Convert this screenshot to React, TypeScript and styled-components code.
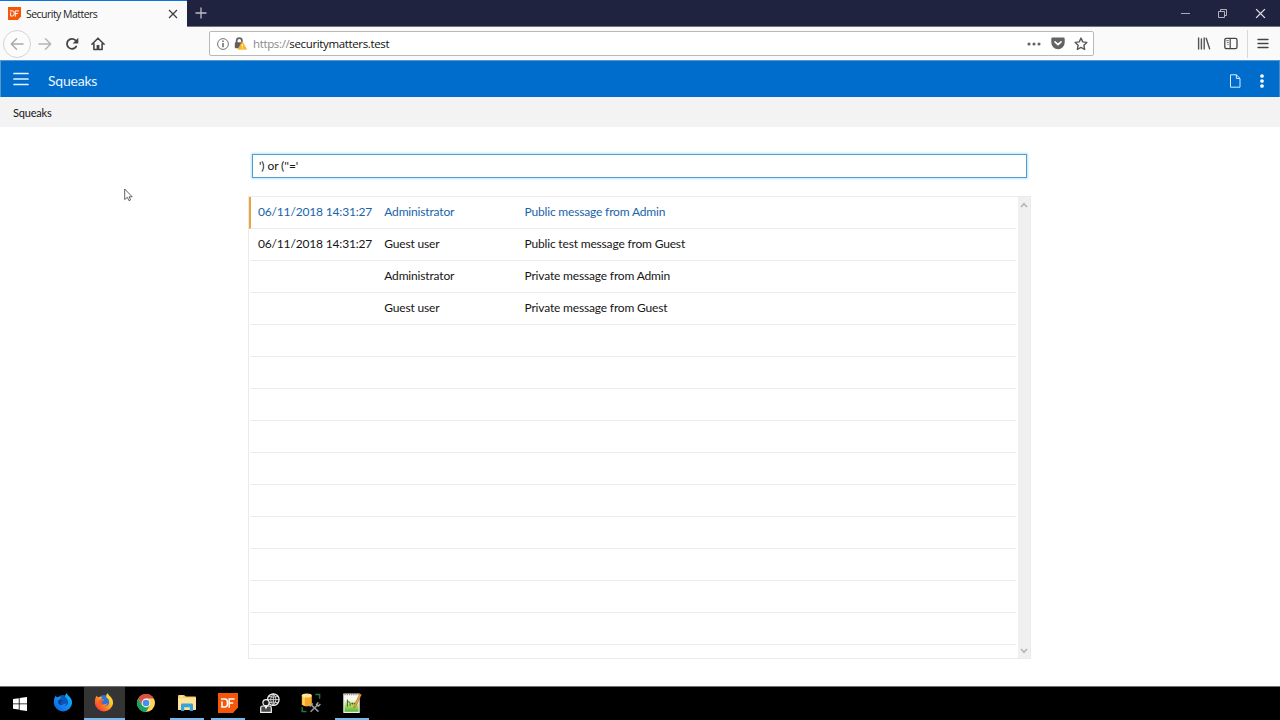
import React from 'react'
import styled, { createGlobalStyle, css } from 'styled-components'

type Message = {
    date: string
    author: string
    text: string
}

const messages: Message[] = [
    { date: '06/11/2018 14:31:27', author: 'Administrator', text: 'Public message from Admin' },
    { date: '06/11/2018 14:31:27', author: 'Guest user', text: 'Public test message from Guest' },
    { date: '', author: 'Administrator', text: 'Private message from Admin' },
    { date: '', author: 'Guest user', text: 'Private message from Guest' },
]

const ROW_COUNT = 14

const rows = Array.from({ length: ROW_COUNT }, (_, i) => messages[i])

const DataFlexIcon = ({ size }: { size: number }) => (
    <svg width={size} height={size} viewBox="0 0 20 20">
        <path d="M0 0h20v14.5L15 20H0z" fill="#f4570b" />
        <path
            d="M3 6h3.6q2.8 0 2.8 2.6v2.6q0 2.7-2.8 2.7H4V8.4M11.2 14.8V6h5.4M11.2 10.1h4"
            fill="none"
            stroke="#fff"
            strokeWidth="1.5"
        />
    </svg>
)

const CloseIcon = ({ size, color }: { size: number; color: string }) => (
    <svg width={size} height={size} viewBox="0 0 10 10">
        <path d="M1 1l8 8M9 1L1 9" stroke={color} strokeWidth="1.2" fill="none" />
    </svg>
)

const ArrowIcon = ({ flip, color }: { flip?: boolean; color: string }) => (
    <svg width="14" height="14" viewBox="0 0 14 14">
        <path
            d="M13 7H1.5M6.5 1.8L1.3 7l5.2 5.2"
            transform={flip ? 'matrix(-1 0 0 1 14 0)' : undefined}
            fill="none"
            stroke={color}
            strokeWidth="1.5"
            strokeLinecap="round"
            strokeLinejoin="round"
        />
    </svg>
)

const ReloadIcon = () => (
    <svg width="14" height="14" viewBox="0 0 14 14">
        <path d="M11.2 9.5A5 5 0 1 1 10.4 3.2" fill="none" stroke="#454548" strokeWidth="1.8" strokeLinecap="round" />
        <path d="M13.3 .8v5.7H7.6z" fill="#454548" />
    </svg>
)

const HomeIcon = () => (
    <svg width="14" height="14" viewBox="0 0 14 14">
        <path
            d="M.9 7.2L7 1.2l6.1 6M2.9 6.8v5.7h8.2V6.8"
            fill="none"
            stroke="#454548"
            strokeWidth="1.6"
            strokeLinecap="round"
            strokeLinejoin="round"
        />
        <path d="M5.6 12.5V8h2.8v4.5z" fill="#454548" />
    </svg>
)

const InfoIcon = () => (
    <svg width="12" height="12" viewBox="0 0 12 12">
        <circle cx="6" cy="6" r="5.4" fill="none" stroke="#737373" strokeWidth="1" />
        <path d="M6 2.6v1.5M6 5v4.3" stroke="#606060" strokeWidth="1.4" />
    </svg>
)

const LockIcon = () => (
    <svg width="13" height="13" viewBox="0 0 13 13">
        <path d="M2.7 6V3.8a2.6 2.6 0 0 1 5.2 0V6" fill="none" stroke="#666" strokeWidth="1.8" />
        <rect x=".8" y="5.2" width="8.4" height="6" rx=".8" fill="#606064" />
        <path d="M8.3 4.7l4.3 7.6H4z" fill="#ffb51c" stroke="#fcb427" strokeWidth=".7" strokeLinejoin="round" />
        <path d="M8.3 7v2.6M8.3 10.4v1.1" stroke="#fff" strokeWidth="1" />
    </svg>
)

const DotsIcon = () => (
    <svg width="14" height="4" viewBox="0 0 14 4">
        <circle cx="2" cy="2" r="1.55" fill="#636366" />
        <circle cx="7" cy="2" r="1.55" fill="#636366" />
        <circle cx="12" cy="2" r="1.55" fill="#636366" />
    </svg>
)

const PocketIcon = () => (
    <svg width="14" height="13" viewBox="0 0 14 13">
        <path d="M1.6.5h10.8q1.3 0 1.3 1.3v3.7a6.7 6.7 0 0 1-13.4 0V1.8Q.3.5 1.6.5z" fill="#636366" />
        <path
            d="M4 4.8l3 2.9 3-2.9"
            fill="none"
            stroke="#fff"
            strokeWidth="1.7"
            strokeLinecap="round"
            strokeLinejoin="round"
        />
    </svg>
)

const StarIcon = () => (
    <svg width="14" height="14" viewBox="0 0 14 14">
        <path
            d="M7 1.1l1.75 3.8 4.1.5-3 2.8.8 4.3L7 10.4l-3.65 2.1.8-4.3-3-2.8 4.1-.5z"
            fill="none"
            stroke="#58585b"
            strokeWidth="1.4"
            strokeLinejoin="round"
        />
    </svg>
)

const LibraryIcon = () => (
    <svg width="14" height="13" viewBox="0 0 14 13">
        <path d="M1.6 1v11M4.4 2v10M7.2 1v11M9.2 1.3l3.4 10.5" stroke="#555558" strokeWidth="1.4" strokeLinecap="round" />
    </svg>
)

const SidebarIcon = () => (
    <svg width="14" height="13" viewBox="0 0 14 13">
        <rect x=".8" y="1.3" width="12.2" height="10.4" rx="1.8" fill="none" stroke="#454548" strokeWidth="1.3" />
        <path d="M6.2 1.5v10" stroke="#454548" strokeWidth="1.2" />
        <path d="M2.3 3.6h2.4M2.8 5.5h1.9M3.4 7.4h1.2" stroke="#68686b" strokeWidth=".9" />
    </svg>
)

const BarsIcon = ({ color, width, gap, weight = 1.5 }: { color: string; width: number; gap: number; weight?: number }) => (
    <svg width={width} height={gap * 2 + 3} viewBox={`0 0 ${width} ${gap * 2 + 3}`}>
        {[0, 1, 2].map(i => (
            <path
                key={i}
                d={`M1 ${1.5 + i * gap}H${width - 1}`}
                stroke={color}
                strokeWidth={weight}
                strokeLinecap="round"
            />
        ))}
    </svg>
)

const PageIcon = () => (
    <svg width="12" height="14" viewBox="0 0 12 14">
        <path d="M1.5.8h5.9L11 4.4v8.8H1.5zM7.4.8v3.6H11" fill="none" stroke="#d6ecff" strokeWidth="1" />
    </svg>
)

const KebabIcon = () => (
    <svg width="4" height="14" viewBox="0 0 4 14">
        <circle cx="2" cy="2" r="1.85" fill="#fff" />
        <circle cx="2" cy="7" r="1.85" fill="#fff" />
        <circle cx="2" cy="12" r="1.85" fill="#fff" />
    </svg>
)

const ChevronIcon = ({ down }: { down?: boolean }) => (
    <svg width="8" height="6" viewBox="0 0 8 6">
        <path d={down ? 'M1 1l3 3.2L7 1' : 'M1 5l3-3.2L7 5'} fill="none" stroke="#b8b8b8" strokeWidth="1.8" />
    </svg>
)

const CursorIcon = () => (
    <svg width="9" height="14" viewBox="0 0 9 14">
        <path
            d="M.7 1v10.6l2.6-2.3 1.7 3.4 1.6-.8L5 8.8h3.2z"
            fill="#fff"
            stroke="#3a3a44"
            strokeWidth=".8"
        />
    </svg>
)

const WindowsIcon = () => (
    <svg width="14" height="14" viewBox="0 0 14 14">
        <path d="M0 2.1l5.8-.9v5.3H0zM6.6 1.1L14 0v6.5H6.6zM0 7.3h5.8v5.3L0 11.8zM6.6 7.3H14V14l-7.4-1.1z" fill="#fff" />
    </svg>
)

const FirefoxIcon = ({ blue }: { blue?: boolean }) => {
    const id = blue ? 'fxdev' : 'fx'
    return (
        <svg width="20" height="20" viewBox="0 0 20 20">
            <defs>
                <linearGradient id={id} x1="1" y1="0" x2=".1" y2=".9">
                    <stop offset="0" stopColor={blue ? '#12c4f5' : '#fff14a'} />
                    <stop offset=".4" stopColor={blue ? '#0a9cf8' : '#ffc02a'} />
                    <stop offset=".7" stopColor={blue ? '#1480f0' : '#ff7422'} />
                    <stop offset="1" stopColor={blue ? '#0a62dc' : '#f5304a'} />
                </linearGradient>
            </defs>
            <circle cx="10" cy="9" r="7" fill={blue ? '#0b56b8' : '#2a72dc'} />
            <path
                d="M2.6 2.4Q3.2 3.8 4.3 4.3 6 3.4 8.3 4.1 7 5 7.4 6.2l2.5.4Q9.2 7.8 7.6 8.6 7.3 11.4 10 11.6q2.2-.4 3.6-1.5-.6 3-3.4 3.5 5-.4 5-4.5Q15 5.8 12.4 4.4 11.6 1.7 13.9.3 14.2 2.6 17 4.2 19.2 6.6 19.1 10.2A9.2 9.2 0 0 1 .8 10.2Q.6 5 2.6 2.4z"
                fill={`url(#${id})`}
            />
            <path
                d="M5.5 7.3q2-1.7 4.4-.3-.5 1.7-2.3 1.9-.2 2.3 2.6 2.4Q7.5 13 5.6 11 4.6 9 5.5 7.3z"
                fill={blue ? '#083c8c' : '#f65c22'}
            />
        </svg>
    )
}

const ChromeIcon = () => (
    <svg width="18" height="18" viewBox="0 0 18 18">
        <circle cx="9" cy="9" r="9" fill="#ffd557" />
        <path d="M1.2 4.5A9 9 0 0 1 16.8 4.5H9L5.1 11.2z" fill="#dd5144" />
        <path d="M1.2 4.5L5.1 11.2 9 13.2 12.9 11.2 9 18A9 9 0 0 1 1.2 4.5z" fill="#1aa260" />
        <circle cx="9" cy="9" r="4.4" fill="#f4f4f4" />
        <circle cx="9" cy="9" r="3.3" fill="#4a8cf0" />
    </svg>
)

const FolderIcon = () => (
    <svg width="18" height="16" viewBox="0 0 18 16">
        <path d="M0 1q0-1 1-1h5l2 1.6h9q1 0 1 1V14q0 1-1 1H1q-1 0-1-1z" fill="#f4ca64" />
        <path d="M0 2.8h18V14q0 1-1 1H1q-1 0-1-1z" fill="#ffe39a" />
        <path d="M3 16V10q0-1.4 1.4-1.4h9.2Q15 8.6 15 10v6h-3.2v-3.8H6.2V16z" fill="#35a4dc" />
        <path d="M1.5 1.2h3.4" stroke="#fff2c8" />
    </svg>
)

const UserGlobeIcon = () => (
    <svg width="20" height="20" viewBox="0 0 20 20">
        <circle cx="13.3" cy="6.6" r="5.8" fill="#111" stroke="#eee" strokeWidth="1.3" />
        <path
            d="M7.5 6.6h11.6M8.5 3.4q4.8 1.6 9.6 0M8.5 9.8q4.8-1.6 9.6 0M13.3.8v11.6M13.3.8q-5.4 5.8 0 11.6M13.3.8q5.4 5.8 0 11.6"
            fill="none"
            stroke="#eee"
            strokeWidth=".8"
        />
        <circle cx="6" cy="9.7" r="3.1" fill="#1a1a1a" stroke="#f4f4f4" strokeWidth="1.2" />
        <path d="M.7 19.3v-4.5q0-1.8 1.9-1.8h6.8q1.9 0 1.9 1.8v4.5z" fill="#484848" stroke="#f4f4f4" strokeWidth="1.2" />
        <path d="M4.4 13h3.2L6 16.6z" fill="#fff" />
    </svg>
)

const DatabaseToolsIcon = () => (
    <svg width="20" height="20" viewBox="0 0 20 20">
        <path d="M.8 2.4v9.4q4.8 3.2 10 0V2.4z" fill="#f9a72b" />
        <path d="M1.3 3v8.5q1.2.8 2.6 1V3.6z" fill="#ffd057" />
        <ellipse cx="5.8" cy="2.5" rx="5" ry="2.1" fill="#ffe49a" />
        <path d="M14.4 1.6h4.2v4.2M5.4 18.6H1.2v-4.4" fill="none" stroke="#327047" strokeWidth="1.5" />
        <path d="M9.6 18.8l7.2-7M10.5 12.1l7 6.5" stroke="#9a9a9a" strokeWidth="1.5" />
        <path d="M19.4 11l-2.1 2-1.7-1.6 1.8-2M8.6 13.6l3.2-3" fill="none" stroke="#a8a8a8" strokeWidth="1.4" />
    </svg>
)

const NotepadIcon = () => (
    <svg width="19" height="20" viewBox="0 0 19 20">
        <defs>
            <linearGradient id="npp" x1="0" y1="0" x2="0" y2="1">
                <stop offset=".3" stopColor="#f8faf0" />
                <stop offset=".62" stopColor="#b4de62" />
                <stop offset="1" stopColor="#4fb13d" />
            </linearGradient>
        </defs>
        <path d="M.9 1h15.2v18.3H.9z" fill="url(#npp)" stroke="#f0f0ec" strokeWidth="1.2" />
        <path d="M1.5 1.6h14" stroke="#8d8d88" strokeDasharray="1.2 1" strokeWidth="1.2" />
        <path d="M4.4 13.6V6.6M4.4 8.8h1.2q1.5.2 1.5 1.6v2.4M8.4 10.6h2.1M11.2 10.6h2.1M9.4 9.7v1.8M12.2 9.7v1.8" fill="none" stroke="#3c5a2e" strokeWidth="1" />
        <path d="M16.7.7l1.8 1-5.8 11.9-1.9 1.4.2-2.4z" fill="#f6a632" stroke="#7d4f20" strokeWidth=".4" />
    </svg>
)

const App = (): React.JSX.Element => (
    <Desktop>
        <GlobalStyle />
        <TitleBar>
            <Tab>
                <DataFlexIcon size={13} />
                <TabTitle>Security Matters</TabTitle>
                <CloseIcon size={10} color="#3b3b3e" />
            </Tab>
            <NewTab>
                <svg width="12" height="12" viewBox="0 0 12 12">
                    <path d="M6 .5v11M.5 6h11" stroke="#bcbdc8" strokeWidth="1.3" />
                </svg>
            </NewTab>
            <WindowControls>
                <svg width="9" height="9" viewBox="0 0 9 9">
                    <path d="M0 4.5h9" stroke="#aaaab4" />
                </svg>
                <svg width="9" height="9" viewBox="0 0 9 9">
                    <path d="M.5 2.5h6v6h-6zM2.5 2.5v-2h6v6h-2" fill="none" stroke="#c3c3cc" strokeWidth=".9" />
                </svg>
                <CloseIcon size={11} color="#e4e4e9" />
            </WindowControls>
        </TitleBar>
        <NavBar>
            <BackButton>
                <ArrowIcon color="#aaa" />
            </BackButton>
            <NavButtons>
                <ArrowIcon flip color="#b5b5b5" />
                <ReloadIcon />
                <HomeIcon />
            </NavButtons>
            <UrlBar>
                <InfoIcon />
                <LockIcon />
                <Url>
                    <Protocol>https://</Protocol>securitymatters.test
                </Url>
                <UrlActions>
                    <DotsIcon />
                    <PocketIcon />
                    <StarIcon />
                </UrlActions>
            </UrlBar>
            <BrowserActions>
                <LibraryIcon />
                <SidebarIcon />
                <MenuButton>
                    <BarsIcon color="#454548" width={12} gap={4} weight={1.4} />
                </MenuButton>
            </BrowserActions>
        </NavBar>
        <AppHeader>
            <MenuToggle>
                <BarsIcon color="#e2f3ff" width={16} gap={5.5} weight={1.7} />
            </MenuToggle>
            <AppTitle>Squeaks</AppTitle>
            <HeaderActions>
                <PageIcon />
                <KebabIcon />
            </HeaderActions>
        </AppHeader>
        <Breadcrumb>Squeaks</Breadcrumb>
        <Content>
            <SearchInput>{`') or (''='`}</SearchInput>
            <List>
                <Rows>
                    {rows.map((message, i) => (
                        <Row key={i} $selected={i === 0}>
                            <Cell>{message?.date}</Cell>
                            <Cell>{message?.author}</Cell>
                            <Cell>{message?.text}</Cell>
                        </Row>
                    ))}
                </Rows>
                <ScrollBar>
                    <ChevronIcon />
                    <ChevronIcon down />
                </ScrollBar>
            </List>
            <Cursor>
                <CursorIcon />
            </Cursor>
        </Content>
        <TaskBar>
            <StartButton><WindowsIcon /></StartButton>
            <Task><FirefoxIcon blue /></Task>
            <Task $active><FirefoxIcon /></Task>
            <Task><ChromeIcon /></Task>
            <Task $running><FolderIcon /></Task>
            <Task $running><DataFlexIcon size={20} /></Task>
            <Task><UserGlobeIcon /></Task>
            <Task><DatabaseToolsIcon /></Task>
            <Task $running><NotepadIcon /></Task>
        </TaskBar>
    </Desktop>
)

const GlobalStyle = createGlobalStyle`
    * {
        box-sizing: border-box;
    }
    body {
        margin: 0;
        overflow: hidden;
    }
    svg {
        display: block;
        flex: none;
    }
`

const chromeFont = css`
    font-family: 'Open Sans', 'Noto Sans', sans-serif;
`

const Desktop = styled.div`
    display: flex;
    flex-direction: column;
    width: 1280px;
    height: 720px;
    background: #fff;
    color: #161616;
    font-family: Lato, sans-serif;
    font-size: 12px;
    white-space: pre;
`

const TitleBar = styled.div`
    display: flex;
    flex: none;
    height: 27px;
    background: #202340;
    border-bottom: 1px solid #72737f;
`

const Tab = styled.div`
    display: flex;
    align-items: center;
    width: 187px;
    height: 27px;
    padding: 0 9px 1px 8px;
    background: #fafafa;
    border-top: 1px solid #0a74e6;
`

const TabTitle = styled.span`
    ${chromeFont}
    flex: 1;
    padding-left: 5px;
    font-size: 10.5px;
    letter-spacing: -0.53px;
    line-height: 16px;
    color: #222;
`

const NewTab = styled.div`
    display: flex;
    align-items: center;
    padding-left: 8px;
`

const WindowControls = styled.div`
    display: flex;
    align-items: center;
    gap: 28px;
    margin-left: auto;
    padding-right: 14px;
`

const NavBar = styled.div`
    display: flex;
    flex: none;
    align-items: center;
    height: 33px;
    padding: 0 11px 0 3px;
    background: #fafafa;
`

const BackButton = styled.div`
    display: flex;
    align-items: center;
    justify-content: center;
    width: 28px;
    height: 28px;
    border: 1px solid #d4d4d4;
    border-radius: 50%;
    background: #fcfcfc;
`

const NavButtons = styled.div`
    display: flex;
    gap: 12.5px;
    width: 68px;
    margin-left: 7px;
`

const UrlBar = styled.div`
    display: flex;
    align-items: center;
    width: 885px;
    height: 25px;
    margin-left: 103px;
    padding: 0 5px 0 7px;
    gap: 5px;
    background: #fff;
    border: 1px solid #b9b9b9;
    border-radius: 2px;
`

const Url = styled.span`
    ${chromeFont}
    padding-left: 1px;
    font-size: 11.5px;
    letter-spacing: -0.36px;
    color: #111;
`

const Protocol = styled.span`
    color: #8b8b8b;
`

const UrlActions = styled.div`
    display: flex;
    align-items: center;
    gap: 9.5px;
    margin-left: auto;
`

const BrowserActions = styled.div`
    display: flex;
    align-items: center;
    gap: 13px;
    margin-left: auto;
`

const MenuButton = styled.div`
    display: flex;
    align-items: center;
    height: 28px;
    padding-left: 9px;
    margin-left: -4px;
    border-left: 1px solid #d8d8d8;
`

const AppHeader = styled.div`
    display: flex;
    flex: none;
    align-items: center;
    height: 37px;
    padding: 0 15px 0 12px;
    background: #006dcc;
    border: 1px solid #5a97c9;
    border-right-color: #3d8fd6;
    border-bottom: none;
    color: #e9f6ff;
`

const MenuToggle = styled.div`
    padding-bottom: 1px;
`

const AppTitle = styled.div`
    padding: 4px 0 0 19px;
    font-size: 14px;
    letter-spacing: -0.22px;
    line-height: 18px;
`

const HeaderActions = styled.div`
    display: flex;
    align-items: center;
    gap: 19px;
    margin: 3px 0 0 auto;
`

const Breadcrumb = styled.div`
    flex: none;
    height: 30px;
    padding-left: 13px;
    background: #f3f3f3;
    font-size: 11px;
    letter-spacing: -0.18px;
    line-height: 32px;
`

const Content = styled.div`
    position: relative;
    display: flex;
    flex: 1;
    flex-direction: column;
    align-items: center;
    padding: 27px 1px 0 0;
`

const SearchInput = styled.div`
    width: 775px;
    height: 24px;
    margin-top: -0.5px;
    padding-left: 6px;
    border: 1px solid #539bd0;
    box-shadow: 0 0 2px 1px #b9e5fb;
    font-size: 12px;
    letter-spacing: -0.1px;
    line-height: 22px;
`

const List = styled.div`
    display: flex;
    width: 783px;
    height: 463px;
    margin-top: 18.5px;
    border: 1px solid #ebebeb;
    overflow: hidden;
`

const Rows = styled.div`
    width: 767px;
`

const Row = styled.div<{ $selected: boolean }>`
    display: grid;
    grid-template-columns: 126.3px 140.2px 1fr;
    height: 32px;
    padding-left: 7px;
    border-left: 2px solid ${({ $selected }) => ($selected ? '#eaa53c' : 'transparent')};
    border-bottom: 1px solid #ebebeb;
    color: ${({ $selected }) => ($selected ? '#1764ab' : '#161616')};
`

const Cell = styled.div`
    font-size: 12px;
    letter-spacing: -0.17px;
    line-height: 30px;
`

const ScrollBar = styled.div`
    display: flex;
    flex-direction: column;
    align-items: center;
    justify-content: space-between;
    width: 12px;
    margin-left: auto;
    padding: 5px 1px 4px 0;
    background: #f0f0f0;
`

const Cursor = styled.div`
    position: absolute;
    left: 124px;
    top: 61px;
`

const TaskBar = styled.div`
    display: flex;
    flex: none;
    height: 34px;
    background: #000;
    border-top: 1px solid #727272;
`

const StartButton = styled.div`
    display: flex;
    align-items: center;
    width: 42.4px;
    padding-left: 13px;
`

const Task = styled.div<{ $active?: boolean; $running?: boolean }>`
    display: flex;
    align-items: center;
    justify-content: center;
    width: 41.3px;
    padding-bottom: 1px;
    background-color: ${({ $active }) => ($active ? '#343434' : 'transparent')};
    background-image: ${({ $active, $running }) =>
        $active || $running ? 'linear-gradient(#76b9ed, #76b9ed)' : 'none'};
    background-repeat: no-repeat;
    background-position: bottom center;
    background-size: ${({ $active }) => ($active ? '100%' : '34px')} 2px;
`

export default App
